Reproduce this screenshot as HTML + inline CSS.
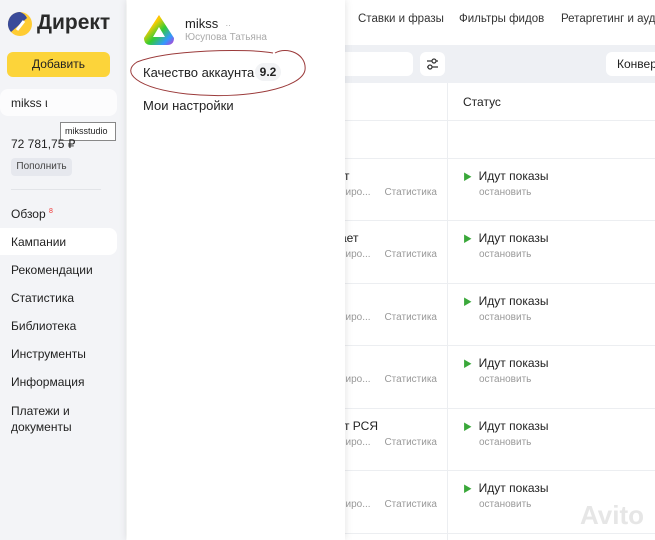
<!DOCTYPE html>
<html><head><meta charset="utf-8"><style>
*{margin:0;padding:0;box-sizing:border-box}
body{width:655px;height:540px;overflow:hidden;position:relative;font-family:"Liberation Sans","Noto Sans CJK SC",sans-serif;background:#fff;color:#222}
.abs{position:absolute}
#side{left:0;top:0;width:126px;height:540px;background:#f3f4f7}
.nav{position:absolute;left:11px;font-size:12px;color:#222}
#main{left:345px;top:0;width:310px;height:540px;background:#fff}
.tab{position:absolute;top:13px;font-size:11.5px;color:#333;white-space:nowrap}
.row{position:absolute;left:0;width:310px;border-top:1px solid #eceef1}
.g{color:#999;font-size:10px}
#pop{left:127px;top:0;width:218px;height:540px;background:#fff;box-shadow:0 0 8px rgba(0,0,0,.12)}
.nm{position:absolute;font-size:12px;white-space:nowrap}
</style></head><body>
<div id="side" class="abs">
  <svg class="abs" style="left:7px;top:11px" width="26" height="26"><circle cx="13" cy="13" r="12" fill="#fc3"/><path d="M13 1A12 12 0 0 0 4 21L20 7A12 12 0 0 0 13 1z" fill="#3a4b9a"/><path d="M10 19l7-9" stroke="#fff" stroke-width="3"/></svg>
  <div class="abs" style="left:37px;top:11px;font-size:21px;font-weight:bold;color:#2a2a2a">Директ</div>
  <div class="abs" style="left:7px;top:52px;width:103px;height:25px;background:#fcd43a;border-radius:6px;text-align:center;line-height:25px;font-size:12px">Добавить</div>
  <div class="abs" style="left:0;top:89px;width:117px;height:27px;background:#fff;border-radius:8px;opacity:.7"></div>
  <div class="abs" style="left:11px;top:96px;font-size:12px">mikss ι</div>
  <div class="abs" style="left:60px;top:122px;width:56px;height:19px;background:#fff;border:1px solid #888;font-size:9px;line-height:17px;padding-left:4px">miksstudio</div>
  <div class="abs" style="left:11px;top:137px;font-size:12px">72 781,75 ₽</div>
  <div class="abs" style="left:11px;top:158px;width:61px;height:18px;background:#e6e8ee;border-radius:4px;font-size:10px;line-height:18px;text-align:center;color:#444">Пополнить</div>
  <div class="abs" style="left:11px;top:189px;width:90px;border-top:1px solid #e2e4e8"></div>
  <div class="nav" style="top:207px">Обзор <sup style="color:#e33;font-size:7px">8</sup></div>
  <div class="abs" style="left:0;top:228px;width:117px;height:27px;background:#fff;border-radius:0 8px 8px 0"></div>
  <div class="nav" style="top:235px">Кампании</div>
  <div class="nav" style="top:263px">Рекомендации</div>
  <div class="nav" style="top:291px">Статистика</div>
  <div class="nav" style="top:319px">Библиотека</div>
  <div class="nav" style="top:347px">Инструменты</div>
  <div class="nav" style="top:375px">Информация</div>
  <div class="nav" style="top:403px;line-height:16px">Платежи и<br>документы</div>
</div>
<div id="main" class="abs">
  <div class="tab" style="left:13px">Ставки и фразы</div>
  <div class="tab" style="left:114px">Фильтры фидов</div>
  <div class="tab" style="left:216px">Ретаргетинг и ауд</div>
  <div class="abs" style="left:0;top:45px;width:310px;height:38px;background:#eef0f4"></div>
  <div class="abs" style="left:0;top:52px;width:68px;height:24px;background:#fff;border-radius:0 6px 6px 0"></div>
  <div class="abs" style="left:75px;top:52px;width:25px;height:24px;background:#fff;border-radius:6px"></div>
  <svg class="abs" style="left:81px;top:58px" width="13" height="12"><path d="M1 3H12M1 9H12" stroke="#333" stroke-width="1.3"/><circle cx="8" cy="3" r="2" fill="#fff" stroke="#333" stroke-width="1.2"/><circle cx="4" cy="9" r="2" fill="#fff" stroke="#333" stroke-width="1.2"/></svg>
  <div class="abs" style="left:261px;top:52px;width:60px;height:24px;background:#fff;border-radius:6px;font-size:12px;line-height:24px;padding-left:11px">Конвер</div>
  <div class="abs" style="left:102px;top:83px;height:457px;border-left:1px solid #eceef1"></div>
  <div class="abs" style="left:118px;top:95px;font-size:12px">Статус</div>
  <div class="row" style="top:120px"></div>
  <div class="row" style="top:158px"></div>
  <div class="row" style="top:220px"></div>
  <div class="row" style="top:283px"></div>
  <div class="row" style="top:345px"></div>
  <div class="row" style="top:408px"></div>
  <div class="row" style="top:470px"></div>
  <div class="row" style="top:533px"></div>
</div>
<div class="nm" style="left:331px;top:169px">ает</div>
<div class="nm" style="left:298px;top:231px">а работает</div>
<div class="nm" style="left:331px;top:419px">ает РСЯ</div>
<div class="abs" style="left:0;top:0">
 <div class="abs g" style="left:340px;top:187px;white-space:nowrap">ниро...&nbsp;&nbsp;&nbsp;&nbsp;&nbsp;Статистика</div>
 <div class="abs g" style="left:340px;top:249px;white-space:nowrap">ниро...&nbsp;&nbsp;&nbsp;&nbsp;&nbsp;Статистика</div>
 <div class="abs g" style="left:340px;top:312px;white-space:nowrap">ниро...&nbsp;&nbsp;&nbsp;&nbsp;&nbsp;Статистика</div>
 <div class="abs g" style="left:340px;top:374px;white-space:nowrap">ниро...&nbsp;&nbsp;&nbsp;&nbsp;&nbsp;Статистика</div>
 <div class="abs g" style="left:340px;top:437px;white-space:nowrap">ниро...&nbsp;&nbsp;&nbsp;&nbsp;&nbsp;Статистика</div>
 <div class="abs g" style="left:340px;top:499px;white-space:nowrap">ниро...&nbsp;&nbsp;&nbsp;&nbsp;&nbsp;Статистика</div>
</div>
<div class="abs" style="left:463px;top:0">
 <div class="abs" style="top:169px;white-space:nowrap;font-size:12px"><span style="color:#3aa83a;font-size:9px">▶</span>&nbsp; Идут показы</div><div class="abs g" style="left:16px;top:187px">остановить</div>
 <div class="abs" style="top:231px;white-space:nowrap;font-size:12px"><span style="color:#3aa83a;font-size:9px">▶</span>&nbsp; Идут показы</div><div class="abs g" style="left:16px;top:249px">остановить</div>
 <div class="abs" style="top:294px;white-space:nowrap;font-size:12px"><span style="color:#3aa83a;font-size:9px">▶</span>&nbsp; Идут показы</div><div class="abs g" style="left:16px;top:312px">остановить</div>
 <div class="abs" style="top:356px;white-space:nowrap;font-size:12px"><span style="color:#3aa83a;font-size:9px">▶</span>&nbsp; Идут показы</div><div class="abs g" style="left:16px;top:374px">остановить</div>
 <div class="abs" style="top:419px;white-space:nowrap;font-size:12px"><span style="color:#3aa83a;font-size:9px">▶</span>&nbsp; Идут показы</div><div class="abs g" style="left:16px;top:437px">остановить</div>
 <div class="abs" style="top:481px;white-space:nowrap;font-size:12px"><span style="color:#3aa83a;font-size:9px">▶</span>&nbsp; Идут показы</div><div class="abs g" style="left:16px;top:499px">остановить</div>
</div>
<div class="abs" style="left:580px;top:500px;font-size:26px;font-weight:bold;color:rgba(210,210,210,.55)">Avito</div>
<div id="pop" class="abs">
  <svg class="abs" style="left:16px;top:14px" width="32" height="32"><defs><linearGradient id="a" x1="0" y1="0" x2="1" y2="1"><stop offset="0" stop-color="#f33"/><stop offset=".3" stop-color="#fc0"/><stop offset=".55" stop-color="#3c3"/><stop offset=".8" stop-color="#39f"/><stop offset="1" stop-color="#c3c"/></linearGradient></defs><path d="M16 1L31 24Q31 31 24 31H8Q1 31 1 24Z" fill="url(#a)"/><path d="M16 13L22 23H10Z" fill="#fff"/></svg>
  <div class="abs" style="left:58px;top:16px;font-size:13px">mikss &nbsp;<span style="color:#999;font-size:8px">··</span></div>
  <div class="abs" style="left:58px;top:32px;font-size:10px;color:#aaa">Юсупова Татьяна</div>
  <svg class="abs" style="left:0;top:44px" width="185" height="56"><path d="M146 9C120 4 40 6 10 18C-6 28 8 44 60 50C120 56 175 44 178 26C180 10 160 2 148 9" fill="none" stroke="#9b3a3a" stroke-width="1"/></svg>
  <div class="abs" style="left:16px;top:65px;font-size:13px">Качество аккаунта</div>
  <div class="abs" style="left:128px;top:63px;width:26px;height:18px;background:#f2f3f5;border-radius:9px;font-size:12px;font-weight:bold;text-align:center;line-height:18px">9.2</div>
  <div class="abs" style="left:16px;top:98px;font-size:13px">Мои настройки</div>
</div>
</body></html>
